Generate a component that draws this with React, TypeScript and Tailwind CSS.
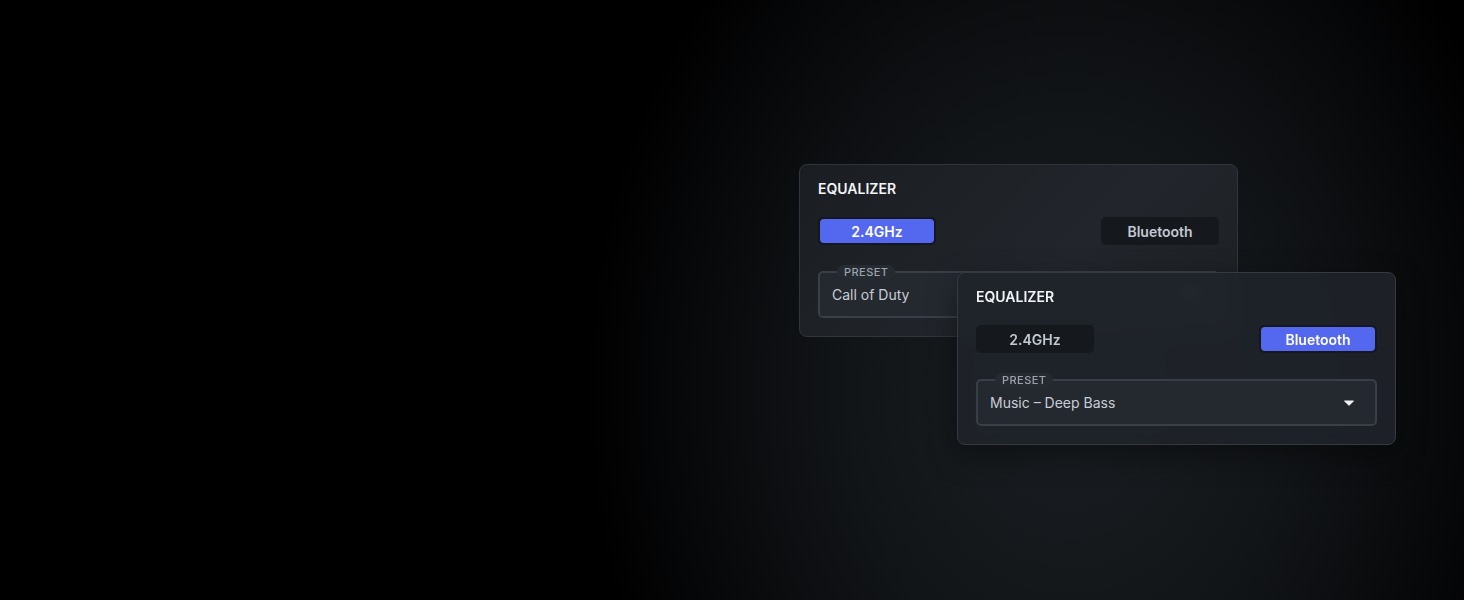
type Band = "2.4GHz" | "Bluetooth";

function Segment({ label, active }: { label: string; active: boolean }) {
  return (
    <div className="w-[118px] h-[28px] rounded-[5px] bg-[#15181c] p-[2px]">
      <div
        className={
          active
            ? "h-full w-full rounded-[4px] bg-[#5467ef] flex items-center justify-center text-[14px] font-semibold text-white"
            : "h-full w-full rounded-[4px] flex items-center justify-center text-[14px] font-semibold text-[#c3c8d1]"
        }
      >
        {label}
      </div>
    </div>
  );
}

function EqualizerCard({ band, preset, glass }: { band: Band; preset: string; glass?: boolean }) {
  return (
    <div
      className={
        glass
          ? "w-[439px] rounded-[8px] border border-[#353a42] bg-[#1f242a]/90 backdrop-blur-[6px] shadow-[0_10px_30px_rgba(0,0,0,0.4)] px-[18px] pt-[13px] pb-[18px]"
          : "w-[439px] rounded-[8px] border border-[#30353c] bg-[linear-gradient(135deg,#1a1d21,#22262c_60%,#1c1f23)] px-[18px] pt-[13px] pb-[18px]"
      }
    >
      <div className="h-[20px] flex items-center text-[14px] font-semibold text-[#f2f4f7]">EQUALIZER</div>
      <div className="mt-[19px] flex justify-between">
        <Segment label="2.4GHz" active={band === "2.4GHz"} />
        <Segment label="Bluetooth" active={band === "Bluetooth"} />
      </div>
      <div className="relative mt-[26px] h-[47px] rounded-[5px] border-2 border-[#393f48] bg-[#242930] flex items-center px-[12px]">
        <span className="absolute -top-[8px] left-[17px] rounded-full bg-[#262b32] px-[7px] text-[11px] leading-[14px] font-medium tracking-[0.04em] text-[#9ca2ac]">
          PRESET
        </span>
        <span className="flex-1 text-[14px] text-[#c8cdd5]">{preset}</span>
        <svg width="10" height="6" viewBox="0 0 10 6" className="mr-[9px] mt-[1px]">
          <path d="M0.6 0.5h8.8c.4 0 .6.4.4.7L5.4 5.5a.5.5 0 0 1-.8 0L.2 1.2C0 .9.2.5.6.5z" fill="#eef0f4" />
        </svg>
      </div>
    </div>
  );
}

export default function App() {
  return (
    <div
      className="h-[600px] w-[1464px] overflow-hidden bg-[radial-gradient(ellipse_33%_100%_at_73%_65%,#1a1e22_0%,#121518_45%,#07080a_80%,#000_100%)]"
      style={{ fontFamily: "Inter, 'Noto Sans', sans-serif" }}
    >
      <div className="relative ml-[799px] mt-[164px] w-[597px] h-[281px]">
        <EqualizerCard band="2.4GHz" preset="Call of Duty" />
        {/* second window sits over the first one, blurring what's below */}
        <div className="absolute left-[158px] top-[108px]">
          <EqualizerCard band="Bluetooth" preset="Music – Deep Bass" glass />
        </div>
      </div>
    </div>
  );
}
